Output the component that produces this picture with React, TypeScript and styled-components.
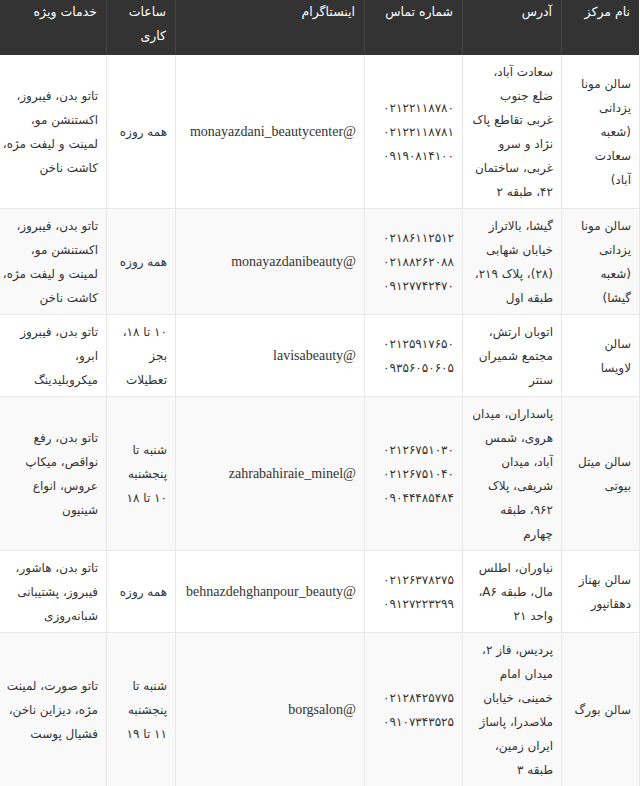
import React from "react";
import styled, { createGlobalStyle } from "styled-components";

type Salon = {
  name: string[];
  address: string[];
  phones: string[];
  instagram: string;
  hours: string[];
  services: string[];
};

const GlobalStyle = createGlobalStyle`
  html, body {
    margin: 0;
    padding: 0;
    background: #fff;
  }
  body {
    font-family: "DejaVu Sans", "Noto Sans", sans-serif;
    direction: rtl;
  }
`;

const Table = styled.table`
  width: 640px;
  border-collapse: collapse;
  table-layout: fixed;
  direction: rtl;
  color: #333;
  font-size: 12px;
  line-height: 24px;
`;

const HeadCell = styled.th<{ $w: number }>`
  box-sizing: border-box;
  width: ${(p) => p.$w}px;
  background: #333;
  color: #fff;
  font-weight: normal;
  font-size: 12.5px;
  text-align: right;
  vertical-align: top;
  padding: 0 9px 7px;
  border-left: 1px solid #444;
  &:first-child {
    border-right: 1px solid #fff;
  }
  &:last-child {
    border-left: none;
  }
`;

const Row = styled.tr<{ $striped: boolean }>`
  background: ${(p) => (p.$striped ? "#f9f9f9" : "#fff")};
`;

const Cell = styled.td<{ $latin?: boolean }>`
  box-sizing: border-box;
  text-align: right;
  vertical-align: middle;
  padding: 5px 8px 4px;
  border: 1px solid #e8e8e8;
  border-top: none;
  font-family: ${(p) =>
    p.$latin ? '"Liberation Serif", "DejaVu Serif", serif' : "inherit"};
  font-size: ${(p) => (p.$latin ? "14px" : "inherit")};
  white-space: nowrap;
`;

const Line = styled.span`
  display: block;
`;

const columns = [
  { title: ["نام مرکز"], w: 78 },
  { title: ["آدرس"], w: 99 },
  { title: ["شماره تماس"], w: 98 },
  { title: ["اینستاگرام"], w: 189 },
  { title: ["ساعات", "کاری"], w: 69 },
  { title: ["خدمات ویژه"], w: 107 },
];

const salons: Salon[] = [
  {
    name: ["سالن مونا", "یزدانی", "(شعبه", "سعادت", "آباد)"],
    address: ["سعادت آباد،", "ضلع جنوب", "غربی تقاطع پاک", "نژاد و سرو", "غربی، ساختمان", "۴۲، طبقه ۲"],
    phones: ["۰۲۱۲۲۱۱۸۷۸۰", "۰۲۱۲۲۱۱۸۷۸۱", "۰۹۱۹۰۸۱۴۱۰۰"],
    instagram: "@monayazdani_beautycenter",
    hours: ["همه روزه"],
    services: ["تاتو بدن، فیبروز،", "اکستنشن مو،", "لمینت و لیفت مژه،", "کاشت ناخن"],
  },
  {
    name: ["سالن مونا", "یزدانی", "(شعبه", "گیشا)"],
    address: ["گیشا، بالاتراز", "خیابان شهابی", "(۲۸)، پلاک ۲۱۹،", "طبقه اول"],
    phones: ["۰۲۱۸۶۱۱۲۵۱۲", "۰۲۱۸۸۲۶۲۰۸۸", "۰۹۱۲۷۷۴۲۴۷۰"],
    instagram: "@monayazdanibeauty",
    hours: ["همه روزه"],
    services: ["تاتو بدن، فیبروز،", "اکستنشن مو،", "لمینت و لیفت مژه،", "کاشت ناخن"],
  },
  {
    name: ["سالن", "لاویسا"],
    address: ["اتوبان ارتش،", "مجتمع شمیران", "سنتر"],
    phones: ["۰۲۱۲۵۹۱۷۶۵۰", "۰۹۳۵۶۰۵۰۶۰۵"],
    instagram: "@lavisabeauty",
    hours: ["۱۰ تا ۱۸،", "بجز", "تعطیلات"],
    services: ["تاتو بدن، فیبروز", "ابرو،", "میکروبلیدینگ"],
  },
  {
    name: ["سالن میتل", "بیوتی"],
    address: ["پاسداران، میدان", "هروی، شمس", "آباد، میدان", "شریفی، پلاک", "۹۶۲، طبقه", "چهارم"],
    phones: ["۰۲۱۲۶۷۵۱۰۳۰", "۰۲۱۲۶۷۵۱۰۴۰", "۰۹۰۴۴۴۸۵۴۸۴"],
    instagram: "@zahrabahiraie_minel",
    hours: ["شنبه تا", "پنجشنبه", "۱۰ تا ۱۸"],
    services: ["تاتو بدن، رفع", "نواقص، میکاپ", "عروس، انواع", "شینیون"],
  },
  {
    name: ["سالن بهناز", "دهقانپور"],
    address: ["نیاوران، اطلس", "مال، طبقه A۶،", "واحد ۲۱"],
    phones: ["۰۲۱۲۶۳۷۸۲۷۵", "۰۹۱۲۷۲۲۳۲۹۹"],
    instagram: "@behnazdehghanpour_beauty",
    hours: ["همه روزه"],
    services: ["تاتو بدن، هاشور،", "فیبروز، پشتیبانی", "شبانه‌روزی"],
  },
  {
    name: ["سالن بورگ"],
    address: ["پردیس، فاز ۲،", "میدان امام", "خمینی، خیابان", "ملاصدرا، پاساژ", "ایران زمین،", "طبقه ۳"],
    phones: ["۰۲۱۲۸۴۲۵۷۷۵", "۰۹۱۰۷۳۴۳۵۲۵"],
    instagram: "@borgsalon",
    hours: ["شنبه تا", "پنجشنبه", "۱۱ تا ۱۹"],
    services: ["تاتو صورت، لمینت", "مژه، دیزاین ناخن،", "فشیال پوست"],
  },
];

const Lines = ({ items }: { items: string[] }) => (
  <>
    {items.map((t, i) => (
      <Line key={i}>{t}</Line>
    ))}
  </>
);

export default function App() {
  return (
    <>
      <GlobalStyle />
      <Table>
        <thead>
          <tr>
            {columns.map((c, i) => (
              <HeadCell key={i} $w={c.w}>
                <Lines items={c.title} />
              </HeadCell>
            ))}
          </tr>
        </thead>
        <tbody>
          {salons.map((s, i) => (
            <Row key={i} $striped={i % 2 === 1}>
              <Cell><Lines items={s.name} /></Cell>
              <Cell><Lines items={s.address} /></Cell>
              <Cell><Lines items={s.phones} /></Cell>
              <Cell $latin>{s.instagram}</Cell>
              <Cell><Lines items={s.hours} /></Cell>
              <Cell><Lines items={s.services} /></Cell>
            </Row>
          ))}
        </tbody>
      </Table>
    </>
  );
}
